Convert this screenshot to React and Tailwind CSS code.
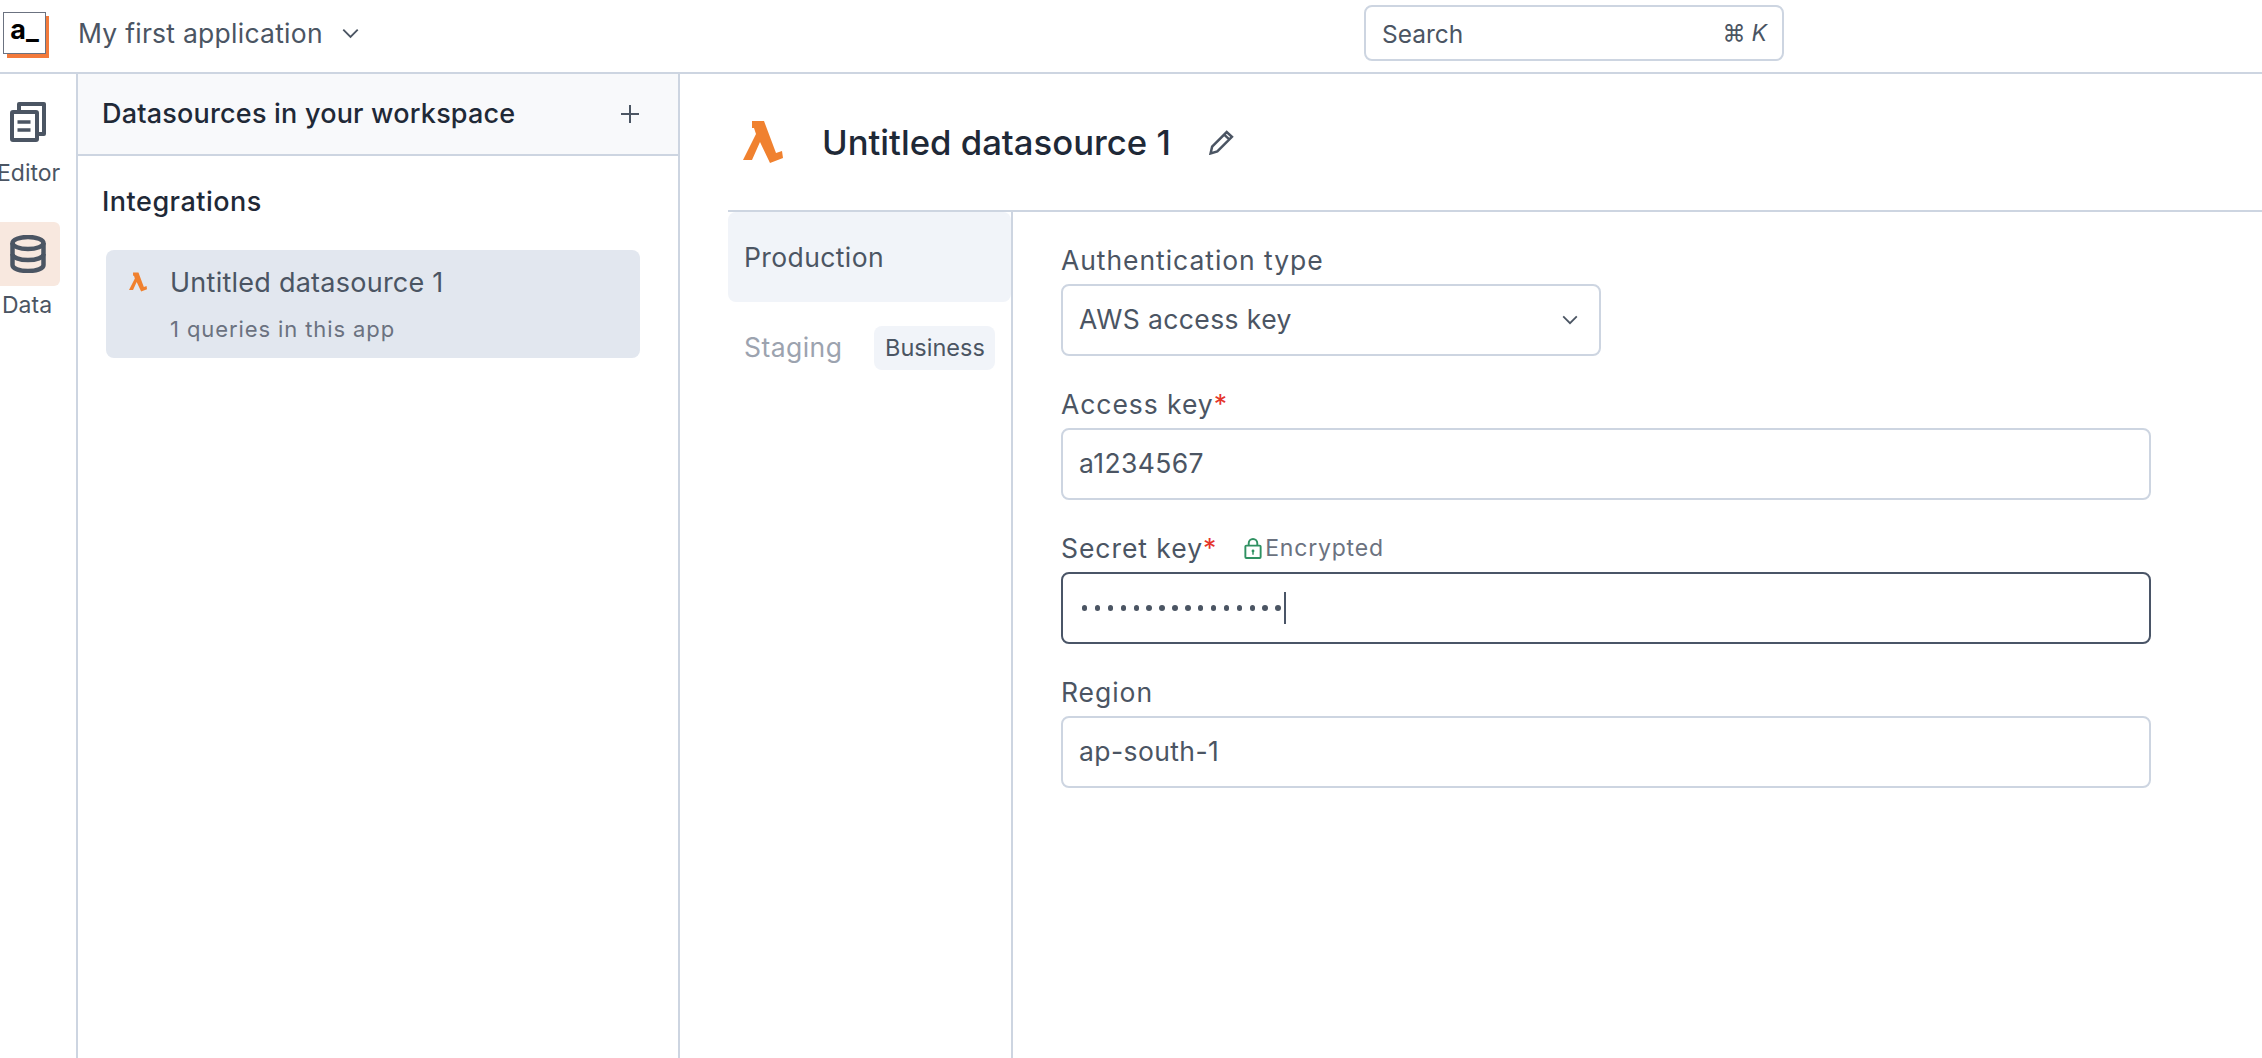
import React from "react";

const Lambda = ({ className }) => (
  <svg viewBox="0 0 40 42" className={className} fill="#f0812f">
    <path d="M9 0H21L33 32 39 30 40 37 27 42 17 21 9 39H0L13 13 11 7H9Z" />
  </svg>
);

const Chevron = ({ className }) => (
  <svg viewBox="0 0 20 12" className={className} fill="none" stroke="#4b5563" strokeWidth="2.200">
    <path d="M1.500 1.500 10 10l8.500-8.500" />
  </svg>
);

const Field = ({ label, req, extra, value, focused, children, width = "w-full" }) => (
  <div className="flex flex-col">
    <div className="flex items-center h-[34px] mb-[7px] text-[26.500px] leading-[34px] text-[#4b5563] tracking-[0.95px]">
      <span>{label}</span>
      {req && <span className="text-[#e5352b]">*</span>}
      {extra}
    </div>
    <div
      className={`${width} h-[72px] rounded-[8px] flex items-center px-[16px] text-[26.500px] text-[#4b5563] tracking-[0.4px] bg-white border-[2px] ${
        focused ? "border-[#4a5567]" : "border-[#cdd5e1]"
      }`}
    >
      {value}
      {children}
    </div>
  </div>
);

export default function App() {
  return (
    <div
      className="w-[2262px] h-[1058px] overflow-hidden bg-white flex flex-col"
      style={{ fontFamily: "Inter, sans-serif" }}
    >
      {/* top bar */}
      <header className="h-[74px] shrink-0 border-b-[2px] border-[#cdd5e1] flex items-center relative">
        <div className="ml-[3px] w-[46px] h-[46px] relative -mt-[3px]">
          <div className="absolute left-[4px] top-[4px] w-[42px] h-[42px] bg-[#f37a3b]" />
          <div className="absolute left-0 top-0 w-[43px] h-[42px] bg-white border border-[#6b7280] flex items-center justify-center">
            <span className="text-[27px] leading-none font-bold text-black -mt-[6px]">a_</span>
          </div>
        </div>
        <span className="ml-[29px] -mt-[5px] text-[26.500px] text-[#4b5563] tracking-[0.25px]">My first application</span>
        <Chevron className="ml-[19px] -mt-[5px] w-[17px] h-[11px]" />
        <div className="absolute left-[1364px] top-[5px] w-[420px] h-[56px] border-[2px] border-[#cdd5e1] rounded-[8px] flex items-center justify-between pl-[16px] pr-[15px]">
          <span className="text-[24.500px] text-[#4b5563] mt-[2px]">Search</span>
          <span className="text-[23px] text-[#4b5563] flex items-center gap-[6px] mt-[1px]">
            <span>⌘</span>
            <span className="italic">K</span>
          </span>
        </div>
      </header>

      <div className="flex flex-1 min-h-0">
        {/* rail */}
        <aside className="w-[78px] shrink-0 border-r-[2px] border-[#cdd5e1] overflow-hidden flex flex-col items-start pl-[10px] pt-[28px]">
          <svg viewBox="0 0 36 40" className="w-[36px] h-[40px] shrink-0" fill="none" stroke="#4b5563" strokeWidth="4" strokeLinejoin="round">
            <path d="M9 8V2H34V32H28" />
            <rect x="2" y="10" width="25" height="28" rx="1" />
            <path d="M7.500 20H20.500M7.500 28H20.500" strokeWidth="3.500" />
          </svg>
          <span className="-ml-[13px] mt-[16px] text-[23px] leading-[30px] text-[#4b5563]">Editor</span>
          <div className="-ml-[10px] mt-[34px] w-[60px] h-[64px] shrink-0 rounded-r-[6px] bg-[#f8e8df] flex items-center justify-start pl-[10px]">
            <svg viewBox="0 0 36 38" className="w-[36px] h-[38px]" fill="none" stroke="#4b5563" strokeWidth="4.500">
              <ellipse cx="18" cy="8" rx="15.500" ry="6" />
              <path d="M2.500 8v22c0 3.500 7 6 15.500 6s15.500-2.500 15.500-6V8" />
              <path d="M2.500 19c0 3.500 7 6 15.500 6s15.500-2.500 15.500-6" />
            </svg>
          </div>
          <span className="-ml-[8px] mt-[4px] text-[23px] leading-[30px] text-[#4b5563]">Data</span>
        </aside>

        {/* datasources panel */}
        <aside className="w-[602px] shrink-0 border-r-[2px] border-[#cdd5e1] flex flex-col">
          <div className="h-[82px] shrink-0 bg-[#f8f9fb] border-b-[2px] border-[#cdd5e1] flex items-center justify-between pl-[24px] pr-[38px]">
            <span className="text-[27px] font-medium text-[#1f2937] tracking-[0.2px] mt-[1px]">Datasources in your workspace</span>
            <svg viewBox="0 0 20 20" className="w-[20px] h-[20px]" stroke="#4b5563" strokeWidth="2">
              <path d="M10 1v18M1 10h18" />
            </svg>
          </div>
          <div className="pl-[24px] pr-[38px] pt-[29px]">
            <div className="text-[27px] leading-[34px] font-medium text-[#1f2937] tracking-[0.5px]">Integrations</div>
            <div className="mt-[31px] ml-[4px] h-[108px] rounded-[8px] bg-[#e2e7ef] flex pl-[23px] pt-[15px]">
              <Lambda className="w-[18px] h-[20px] mt-[7px] shrink-0" />
              <div className="ml-[23px]">
                <div className="text-[27px] leading-[36px] text-[#4b5563] tracking-[0.25px]">Untitled datasource 1</div>
                <div className="mt-[15px] text-[22px] leading-[26px] text-[#6b7280] tracking-[0.9px]">1 queries in this app</div>
              </div>
            </div>
          </div>
        </aside>

        {/* main */}
        <main className="flex-1 min-w-0 flex flex-col pl-[48px]">
          <div className="h-[138px] shrink-0 border-b-[2px] border-[#cdd5e1] flex items-center">
            <Lambda className="ml-[15px] w-[40px] h-[42px] shrink-0" />
            <span className="ml-[39px] text-[34.700px] font-medium text-[#1f2937] mt-[1px]">Untitled datasource 1</span>
            <svg viewBox="0 0 24 24" className="ml-[38px] w-[25px] h-[25px]" fill="none" stroke="#4b5563" strokeWidth="2.400">
              <path d="M1.500 22.500 3 16 17 2l5 4.500-14 14z" />
              <path d="M14.500 4.500l5 4.500" />
            </svg>
          </div>
          <div className="flex flex-1 min-h-0">
            <nav className="w-[285px] shrink-0 border-r-[2px] border-[#cdd5e1]">
              <div className="w-[283px] h-[90px] rounded-[8px] bg-[#f1f4f9] flex items-center pl-[16px] text-[26.500px] tracking-[0.4px] text-[#4b5563]">
                <span className="mt-[1px]">Production</span>
              </div>
              <div className="flex items-center pl-[16px] h-[92px] text-[26.500px] tracking-[0.45px] text-[#9ca3af]">
                Staging
                <span className="ml-[32px] h-[44px] w-[121px] rounded-[8px] bg-[#f1f4f9] text-[23.500px] tracking-normal text-[#4b5563] flex items-center justify-center">
                  Business
                </span>
              </div>
            </nav>
            <section className="pl-[48px] pt-[31px] flex flex-col gap-[31px] w-[1138px]">
              <Field label="Authentication type" value="AWS access key" width="w-[540px]">
                <Chevron className="ml-auto mr-[5px] w-[16px] h-[10px]" />
              </Field>
              <Field label="Access key" req value="a1234567" />
              <Field
                label="Secret key"
                req
                focused
                value={
                  <span className="flex items-center ml-[3px]">
                    <span className="flex gap-[7.500px]">
                      {Array.from({ length: 16 }).map((_, i) => (
                        <span key={i} className="block w-[5.400px] h-[5.400px] rounded-full bg-[#4b5563]" />
                      ))}
                    </span>
                    <span className="ml-[3px] block w-[2px] h-[32px] bg-[#4a5567]" />
                  </span>
                }
                extra={
                  <span className="ml-[27px] flex items-center text-[23px] text-[#6b7280] tracking-[0.8px]">
                    <svg viewBox="0 0 18 22" className="w-[18px] h-[21px] mr-[3px]" fill="none" stroke="#2f9162" strokeWidth="2">
                      <rect x="1" y="8" width="16" height="13" rx="1" />
                      <path d="M4.500 8V5.500a4.500 4.500 0 0 1 9 0V8" />
                      <circle cx="9" cy="13.500" r="1.500" fill="#2f9162" stroke="none" />
                      <path d="M9 14v3.500" strokeWidth="1.500" />
                    </svg>
                    Encrypted
                  </span>
                }
              />
              <Field label="Region" value="ap-south-1" />
            </section>
          </div>
        </main>
      </div>
    </div>
  );
}
